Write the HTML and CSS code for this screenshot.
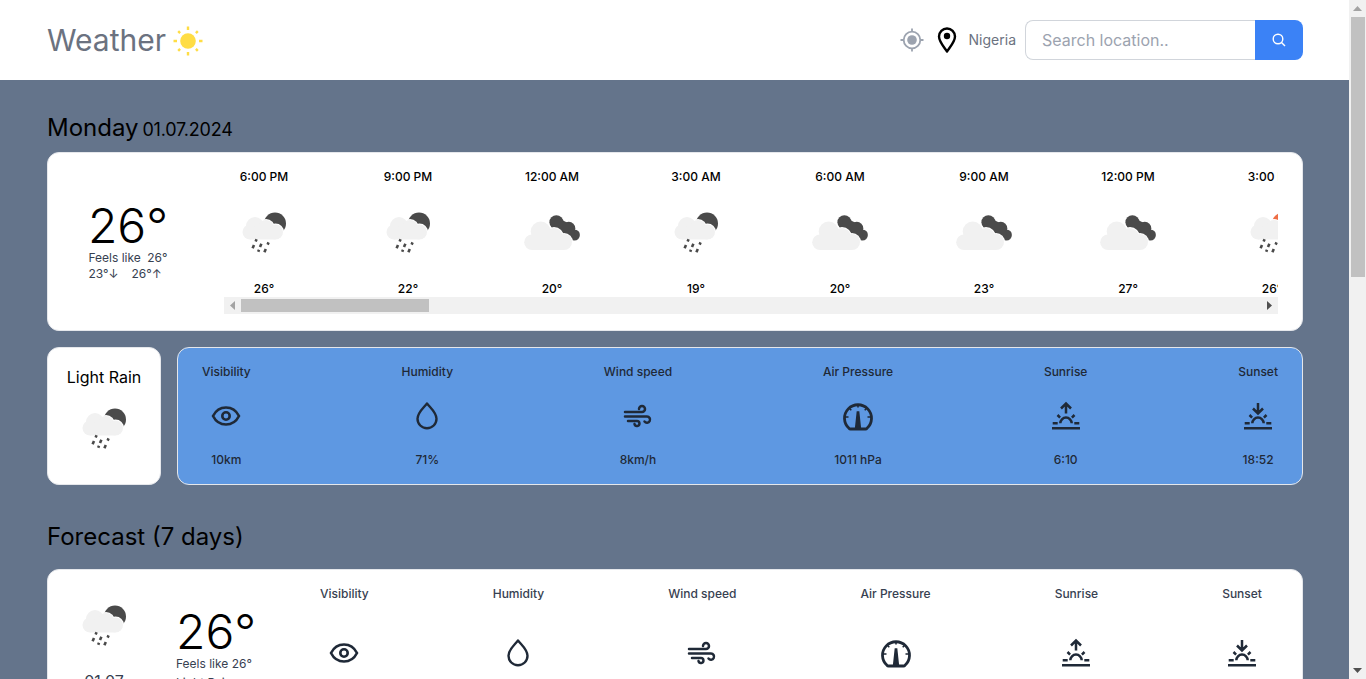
FILE: index.html
```html
<!DOCTYPE html>
<html lang="en">
<head>
<meta charset="utf-8">
<title>Weather</title>
<link rel="stylesheet" href="styles.css">
</head>
<body>
<svg class="sprites" aria-hidden="true">
  <symbol id="rain" viewBox="0 0 80 80">
    <circle cx="51" cy="30.500" r="11" fill="#4a4a4a"/>
    <g fill="#fff"><circle cx="31" cy="33" r="9.500"/><circle cx="42" cy="35" r="9"/><circle cx="51.500" cy="39" r="8.500"/></g>
    <g fill="#f1f1f1"><circle cx="31" cy="33" r="9"/><circle cx="26" cy="39" r="7.500"/><circle cx="42" cy="35" r="8"/><circle cx="51.500" cy="39" r="7.500"/><rect x="26" y="35" width="25.500" height="11.500"/></g>
    <path d="M32.600 46.300l-1 2.200M30 52l-1.400 3.200M37.400 50.800l-1.400 3.200M44.600 49.400l-1 2.200M35 56.800l-.8 2M41.800 56l-1.400 3.200" stroke="#4a4a4a" stroke-width="2.600"/>
  </symbol>
  <symbol id="rain-sun" viewBox="0 0 80 80">
    <circle cx="51" cy="30.500" r="11" fill="#ee6e46"/>
    <g fill="#fff"><circle cx="31" cy="33" r="9.500"/><circle cx="42" cy="35" r="9"/><circle cx="51.500" cy="39" r="8.500"/></g>
    <g fill="#f1f1f1"><circle cx="31" cy="33" r="9"/><circle cx="26" cy="39" r="7.500"/><circle cx="42" cy="35" r="8"/><circle cx="51.500" cy="39" r="7.500"/><rect x="26" y="35" width="25.500" height="11.500"/></g>
    <path d="M32.600 46.300l-1 2.200M30 52l-1.400 3.200M37.400 50.800l-1.400 3.200M44.600 49.400l-1 2.200M35 56.800l-.8 2M41.800 56l-1.400 3.200" stroke="#4a4a4a" stroke-width="2.600"/>
  </symbol>
  <symbol id="clouds" viewBox="0 0 80 80">
    <g fill="#4a4a4a"><circle cx="44.400" cy="29.300" r="7"/><circle cx="56.800" cy="35.300" r="6.500"/><circle cx="62.400" cy="42" r="5.500"/><path d="M44 24L60 32 64 46 56 46 42 32Z"/></g>
    <g fill="#fff"><circle cx="28.700" cy="38.500" r="11"/><circle cx="42" cy="44" r="10"/><circle cx="52" cy="49" r="9"/></g>
    <g fill="#f1f1f1"><circle cx="28.700" cy="38.500" r="10"/><circle cx="20" cy="49.200" r="7.800"/><circle cx="42" cy="44" r="9"/><circle cx="52" cy="49" r="8"/><rect x="20" y="42" width="32" height="15"/></g>
  </symbol>
  <symbol id="eye" viewBox="0 0 36 36">
    <path d="M5 18c2.600-5.200 7.200-8.500 13-8.500S28.400 12.800 31 18c-2.600 5.200-7.200 8.500-13 8.500S7.600 23.200 5 18Z" fill="none" stroke="currentColor" stroke-width="2.600"/>
    <circle cx="18" cy="18" r="3.700" fill="none" stroke="currentColor" stroke-width="2.600"/>
  </symbol>
  <symbol id="drop" viewBox="0 0 36 36">
    <path d="M18 5.500C14 10.500 8.500 14.500 8.500 20.800a9.500 9.500 0 0 0 19 0C27.500 14.500 22 10.500 18 5.500Z" fill="none" stroke="currentColor" stroke-width="2.400" stroke-linejoin="round"/>
  </symbol>
  <symbol id="wind" viewBox="0 0 36 36">
    <path d="M5 14H22a3 3 0 1 0-3-3M5 18.500H27a3.100 3.100 0 1 1-2.500 5M8 23H17a2.500 2.500 0 1 1-2.500 3" fill="none" stroke="currentColor" stroke-width="2.500" stroke-linecap="round"/>
  </symbol>
  <symbol id="gauge" viewBox="0 0 36 36">
    <path d="M10.500 31a2 2 0 0 1-1.500-.7A13.500 13.500 0 1 1 27 30.300a2 2 0 0 1-1.500.7Z" fill="none" stroke="currentColor" stroke-width="2.800"/>
    <path d="M17.400 14h1.200l1.800 17h-4.800ZM18 6v3.500M5 19h3.500M27.500 19H31M9 10l2.300 2.300M27 10l-2.300 2.300" fill="currentColor" stroke="currentColor" stroke-width="1.600"/>
  </symbol>
  <symbol id="sunrise" viewBox="0 0 36 36">
    <path d="M4 30.300H32M4.700 25.300H9.700M26.300 25.300H31.300M12.300 25.300a5.700 5.700 0 0 1 11.400 0M9.500 17l2.600 2.600M26.500 17l-2.600 2.600M18 15.500V5.500M13 10.500l5-5 5 5" fill="none" stroke="currentColor" stroke-width="2.500"/>
  </symbol>
  <symbol id="sunset" viewBox="0 0 36 36">
    <path d="M4 30.300H32M4.700 25.300H9.700M26.300 25.300H31.300M12.300 25.300a5.700 5.700 0 0 1 11.400 0M9.500 17l2.600 2.600M26.500 17l-2.600 2.600M18 5V15.500M13 10.500l5 5 5-5" fill="none" stroke="currentColor" stroke-width="2.500"/>
  </symbol>
</svg>

<header class="topbar">
  <div class="topbar-inner">
    <div class="brand">
      <span class="brand-name">Weather</span>
      <svg class="sun" viewBox="0 0 32 32">
        <circle cx="16" cy="16" r="7.800" fill="#ffdd44"/>
        <path d="M16 1.500V5M16 27V30.500M1.500 16H5M27 16H30.500M6.200 6.200l1.900 1.900M23.900 23.900l1.900 1.900M6.200 25.800l1.900-1.900M23.900 8.100l1.900-1.900" stroke="#ffdd44" stroke-width="2.400"/>
      </svg>
    </div>
    <div class="tools">
      <svg class="gps" viewBox="0 0 24 24">
        <circle cx="12" cy="12" r="8.300" fill="none" stroke="#9ca3af" stroke-width="1.800"/>
        <circle cx="12" cy="12" r="4.800" fill="#9ca3af"/>
        <path d="M12 .5V4M12 20V23.500M.5 12H4M20 12H23.500" stroke="#9ca3af" stroke-width="1.800"/>
      </svg>
      <svg class="pin" viewBox="0 0 20 26">
        <path d="M10 24.500C6.500 19.500 2 14.500 2 9.500a8 8 0 0 1 16 0C18 14.500 13.500 19.500 10 24.500Z" fill="none" stroke="#000" stroke-width="2.400" stroke-linejoin="round"/>
        <circle cx="10" cy="9" r="3.200" fill="#000"/>
      </svg>
      <span class="place">Nigeria</span>
      <form class="search">
        <input class="search-input" type="text" placeholder="Search location..">
        <button class="search-btn" type="button" aria-label="Search">
          <svg viewBox="0 0 16 16"><circle cx="7" cy="7" r="4.800" fill="none" stroke="#fff" stroke-width="1.400"/><path d="M10.500 10.500L14 14" stroke="#fff" stroke-width="1.400"/></svg>
        </button>
      </form>
    </div>
  </div>
</header>

<main class="page">
  <h1 class="day-title">Monday<small class="day-date"> 01.07.2024</small></h1>
  <section class="card today">
    <div class="now">
      <div class="big-temp">26°</div>
      <div class="feels"><span>Feels like</span><span>26°</span></div>
      <div class="minmax"><span>23°↓</span><span>26°↑</span></div>
    </div>
    <div class="hours-wrap">
      <div class="hours">
        <div class="hour"><span>6:00 PM</span><svg class="wx"><use href="#rain"/></svg><span>26°</span></div>
        <div class="hour"><span>9:00 PM</span><svg class="wx"><use href="#rain"/></svg><span>22°</span></div>
        <div class="hour"><span>12:00 AM</span><svg class="wx"><use href="#clouds"/></svg><span>20°</span></div>
        <div class="hour"><span>3:00 AM</span><svg class="wx"><use href="#rain"/></svg><span>19°</span></div>
        <div class="hour"><span>6:00 AM</span><svg class="wx"><use href="#clouds"/></svg><span>20°</span></div>
        <div class="hour"><span>9:00 AM</span><svg class="wx"><use href="#clouds"/></svg><span>23°</span></div>
        <div class="hour"><span>12:00 PM</span><svg class="wx"><use href="#clouds"/></svg><span>27°</span></div>
        <div class="hour"><span>3:00 PM</span><svg class="wx"><use href="#rain-sun"/></svg><span>26°</span></div>
      </div>
      <div class="hbar">
        <svg class="hbar-btn" viewBox="0 0 17 17"><path d="M6 8.500l5-4.500v9Z" fill="#a3a3a3"/></svg>
        <div class="hbar-track"><div class="hbar-thumb"></div></div>
        <svg class="hbar-btn" viewBox="0 0 17 17"><path d="M11 8.500L6 4v9Z" fill="#505050"/></svg>
      </div>
    </div>
  </section>

  <section class="detail-row">
    <div class="card condition">
      <div class="condition-name">Light Rain</div>
      <svg class="wx"><use href="#rain"/></svg>
    </div>
    <div class="metrics-card">
      <div class="metric"><span>Visibility</span><svg class="mi"><use href="#eye"/></svg><span>10km</span></div>
      <div class="metric"><span>Humidity</span><svg class="mi"><use href="#drop"/></svg><span>71%</span></div>
      <div class="metric"><span>Wind speed</span><svg class="mi"><use href="#wind"/></svg><span>8km/h</span></div>
      <div class="metric"><span>Air Pressure</span><svg class="mi"><use href="#gauge"/></svg><span>1011 hPa</span></div>
      <div class="metric"><span>Sunrise</span><svg class="mi"><use href="#sunrise"/></svg><span>6:10</span></div>
      <div class="metric"><span>Sunset</span><svg class="mi"><use href="#sunset"/></svg><span>18:52</span></div>
    </div>
  </section>

  <h2 class="section-title">Forecast (7 days)</h2>
  <section class="forecast">
    <article class="card day">
      <div class="day-icon"><svg class="wx"><use href="#rain"/></svg><span>01.07</span></div>
      <div class="day-temp"><div class="big-temp">26°</div><div>Feels like 26°</div><div class="day-cond">Light Rain</div></div>
      <div class="day-metrics">
        <div class="metric"><span>Visibility</span><svg class="mi"><use href="#eye"/></svg><span>10km</span></div>
        <div class="metric"><span>Humidity</span><svg class="mi"><use href="#drop"/></svg><span>71%</span></div>
        <div class="metric"><span>Wind speed</span><svg class="mi"><use href="#wind"/></svg><span>8km/h</span></div>
        <div class="metric"><span>Air Pressure</span><svg class="mi"><use href="#gauge"/></svg><span>1011 hPa</span></div>
        <div class="metric"><span>Sunrise</span><svg class="mi"><use href="#sunrise"/></svg><span>6:10</span></div>
        <div class="metric"><span>Sunset</span><svg class="mi"><use href="#sunset"/></svg><span>18:52</span></div>
      </div>
    </article>
    <article class="card day">
      <div class="day-icon"><svg class="wx"><use href="#rain"/></svg><span>02.07</span></div>
      <div class="day-temp"><div class="big-temp">26°</div><div>Feels like 26°</div><div class="day-cond">Light Rain</div></div>
      <div class="day-metrics">
        <div class="metric"><span>Visibility</span><svg class="mi"><use href="#eye"/></svg><span>10km</span></div>
        <div class="metric"><span>Humidity</span><svg class="mi"><use href="#drop"/></svg><span>71%</span></div>
        <div class="metric"><span>Wind speed</span><svg class="mi"><use href="#wind"/></svg><span>8km/h</span></div>
        <div class="metric"><span>Air Pressure</span><svg class="mi"><use href="#gauge"/></svg><span>1011 hPa</span></div>
        <div class="metric"><span>Sunrise</span><svg class="mi"><use href="#sunrise"/></svg><span>6:10</span></div>
        <div class="metric"><span>Sunset</span><svg class="mi"><use href="#sunset"/></svg><span>18:52</span></div>
      </div>
    </article>
    <article class="card day">
      <div class="day-icon"><svg class="wx"><use href="#rain"/></svg><span>03.07</span></div>
      <div class="day-temp"><div class="big-temp">26°</div><div>Feels like 26°</div><div class="day-cond">Light Rain</div></div>
      <div class="day-metrics">
        <div class="metric"><span>Visibility</span><svg class="mi"><use href="#eye"/></svg><span>10km</span></div>
        <div class="metric"><span>Humidity</span><svg class="mi"><use href="#drop"/></svg><span>71%</span></div>
        <div class="metric"><span>Wind speed</span><svg class="mi"><use href="#wind"/></svg><span>8km/h</span></div>
        <div class="metric"><span>Air Pressure</span><svg class="mi"><use href="#gauge"/></svg><span>1011 hPa</span></div>
        <div class="metric"><span>Sunrise</span><svg class="mi"><use href="#sunrise"/></svg><span>6:10</span></div>
        <div class="metric"><span>Sunset</span><svg class="mi"><use href="#sunset"/></svg><span>18:52</span></div>
      </div>
    </article>
    <article class="card day">
      <div class="day-icon"><svg class="wx"><use href="#rain"/></svg><span>04.07</span></div>
      <div class="day-temp"><div class="big-temp">26°</div><div>Feels like 26°</div><div class="day-cond">Light Rain</div></div>
      <div class="day-metrics">
        <div class="metric"><span>Visibility</span><svg class="mi"><use href="#eye"/></svg><span>10km</span></div>
        <div class="metric"><span>Humidity</span><svg class="mi"><use href="#drop"/></svg><span>71%</span></div>
        <div class="metric"><span>Wind speed</span><svg class="mi"><use href="#wind"/></svg><span>8km/h</span></div>
        <div class="metric"><span>Air Pressure</span><svg class="mi"><use href="#gauge"/></svg><span>1011 hPa</span></div>
        <div class="metric"><span>Sunrise</span><svg class="mi"><use href="#sunrise"/></svg><span>6:10</span></div>
        <div class="metric"><span>Sunset</span><svg class="mi"><use href="#sunset"/></svg><span>18:52</span></div>
      </div>
    </article>
    <article class="card day">
      <div class="day-icon"><svg class="wx"><use href="#rain"/></svg><span>05.07</span></div>
      <div class="day-temp"><div class="big-temp">26°</div><div>Feels like 26°</div><div class="day-cond">Light Rain</div></div>
      <div class="day-metrics">
        <div class="metric"><span>Visibility</span><svg class="mi"><use href="#eye"/></svg><span>10km</span></div>
        <div class="metric"><span>Humidity</span><svg class="mi"><use href="#drop"/></svg><span>71%</span></div>
        <div class="metric"><span>Wind speed</span><svg class="mi"><use href="#wind"/></svg><span>8km/h</span></div>
        <div class="metric"><span>Air Pressure</span><svg class="mi"><use href="#gauge"/></svg><span>1011 hPa</span></div>
        <div class="metric"><span>Sunrise</span><svg class="mi"><use href="#sunrise"/></svg><span>6:10</span></div>
        <div class="metric"><span>Sunset</span><svg class="mi"><use href="#sunset"/></svg><span>18:52</span></div>
      </div>
    </article>
    <article class="card day">
      <div class="day-icon"><svg class="wx"><use href="#rain"/></svg><span>06.07</span></div>
      <div class="day-temp"><div class="big-temp">26°</div><div>Feels like 26°</div><div class="day-cond">Light Rain</div></div>
      <div class="day-metrics">
        <div class="metric"><span>Visibility</span><svg class="mi"><use href="#eye"/></svg><span>10km</span></div>
        <div class="metric"><span>Humidity</span><svg class="mi"><use href="#drop"/></svg><span>71%</span></div>
        <div class="metric"><span>Wind speed</span><svg class="mi"><use href="#wind"/></svg><span>8km/h</span></div>
        <div class="metric"><span>Air Pressure</span><svg class="mi"><use href="#gauge"/></svg><span>1011 hPa</span></div>
        <div class="metric"><span>Sunrise</span><svg class="mi"><use href="#sunrise"/></svg><span>6:10</span></div>
        <div class="metric"><span>Sunset</span><svg class="mi"><use href="#sunset"/></svg><span>18:52</span></div>
      </div>
    </article>
  </section>
</main>

<aside class="vbar" aria-hidden="true">
  <svg class="vbar-btn" viewBox="0 0 17 17"><path d="M8.500 6l4.500 5H4Z" fill="#a3a3a3"/></svg>
  <div class="vbar-track"><div class="vbar-thumb"></div></div>
  <svg class="vbar-btn" viewBox="0 0 17 17"><path d="M8.500 11L4 6h9Z" fill="#505050"/></svg>
</aside>
</body>
</html>
```
FILE: styles.css
```css
* { box-sizing: border-box; }
body {
  margin: 0;
  padding-right: 17px;
  background: #64748b;
  color: #000;
  font-family: Inter, "Liberation Sans", sans-serif;
  font-size: 16px;
  line-height: 24px;
}
.sprites { display: none; }

/* window scrollbar */
.vbar {
  position: fixed;
  top: 0;
  right: 0;
  bottom: 0;
  width: 17px;
  background: #f1f1f1;
  display: flex;
  flex-direction: column;
}
.vbar-btn { display: block; width: 17px; height: 17px; flex: none; }
.vbar-track { flex: 1; padding: 0 1px 0 2px; }
.vbar-thumb { height: 260px; background: #c1c1c1; }

/* top bar */
.topbar { background: #fff; height: 80px; }
.topbar-inner {
  height: 100%;
  margin: 0 46px 0 47px;
  display: flex;
  align-items: center;
  justify-content: space-between;
}
.brand { display: flex; align-items: center; gap: 6px; }
.brand-name { font-size: 30px; line-height: 40px; color: #6b7280; }
.sun { width: 32px; height: 32px; margin-top: 1px; }
.tools { display: flex; align-items: center; }
.gps { width: 24px; height: 24px; margin-right: 13px; }
.pin { width: 20px; height: 26px; margin-right: 12px; }
.place { font-size: 14px; line-height: 20px; color: #6b7280; margin-right: 9px; }
.search { display: flex; height: 40px; }
.search-input {
  width: 230px;
  height: 40px;
  padding: 0 16px;
  border: 1px solid #d1d5db;
  border-right: 0;
  border-radius: 8px 0 0 8px;
  font: 16px/24px Inter, "Liberation Sans", sans-serif;
  outline: 0;
}
.search-input::placeholder { color: #9ca3af; opacity: 1; }
.search-btn {
  width: 48px;
  height: 40px;
  padding: 0;
  border: 0;
  border-radius: 0 8px 8px 0;
  background: #3b82f6;
  display: flex;
  align-items: center;
  justify-content: center;
}
.search-btn svg { width: 16px; height: 16px; }

/* page */
.page { margin: 0 46px 0 47px; padding: 32px 0; }
.day-title { margin: 0 0 8px; font-size: 24px; line-height: 32px; font-weight: 400; }
.day-date { font-size: 18px; line-height: 1; letter-spacing: -.2px; margin-left: -1px; }
.section-title { margin: 36px 0 16px; font-size: 24px; line-height: 32px; font-weight: 400; }
.card { background: #fff; border: 1px solid #e5e7eb; border-radius: 12px; }
.wx { display: block; width: 80px; height: 80px; flex: none; }

/* today */
.today { display: flex; align-items: center; gap: 32px; padding: 16px 24px 16px 16px; height: 179px; }
.now { width: 128px; flex: none; display: flex; flex-direction: column; align-items: center; font-size: 12px; line-height: 16px; color: #374151; }
.big-temp { font-size: 48px; line-height: 48px; font-weight: 300; color: #000; }
.feels { width: 79px; display: flex; justify-content: space-between; }
.minmax { width: 79px; display: flex; gap: 13px; }
.hours-wrap { flex: 1; min-width: 0; align-self: flex-start; }
.hours { display: flex; gap: 64px; overflow: hidden; }
.hour { width: 80px; flex: none; display: flex; flex-direction: column; align-items: center; gap: 8px; font-size: 12px; line-height: 16px; font-weight: 500; white-space: nowrap; }
.hbar { display: flex; height: 17px; background: #f1f1f1; }
.hbar-btn { display: block; width: 17px; height: 17px; flex: none; }
.hbar-track { flex: 1; padding: 2px 0; }
.hbar-thumb { width: 188px; height: 13px; background: #c1c1c1; }

/* details */
.detail-row { display: flex; gap: 16px; margin-top: 16px; }
.condition { display: flex; flex-direction: column; align-items: center; padding: 17px 16px 15px; }
.condition-name { white-space: nowrap; }
.metrics-card {
  flex: 1;
  display: flex;
  justify-content: space-between;
  padding: 16px 24px;
  border: 1px solid #e5e7eb;
  border-radius: 12px;
  background: #5e98e2;
  color: #1f2937;
}
.metric { display: flex; flex-direction: column; align-items: center; justify-content: space-between; font-size: 12px; line-height: 16px; font-weight: 500; white-space: nowrap; height: 104px; }
.mi { display: block; width: 36px; height: 36px; flex: none; color: #1f2937; }

/* forecast */
.forecast { display: flex; flex-direction: column; gap: 16px; }
.day { display: flex; height: 167px; padding: 16px 40px 16px 16px; color: #374151; }
.day-icon { width: 80px; flex: none; display: flex; flex-direction: column; align-items: center; margin-right: 32px; }
.day-icon span { margin-top: 3px; }
.day-temp { width: 80px; flex: none; padding-top: 22px; font-size: 12px; line-height: 16px; white-space: nowrap; }
.day-cond { margin-top: 3px; }
.day-metrics { flex: 1; display: flex; justify-content: space-between; margin-left: 64px; }
.day-metrics .metric { height: auto; }
```
